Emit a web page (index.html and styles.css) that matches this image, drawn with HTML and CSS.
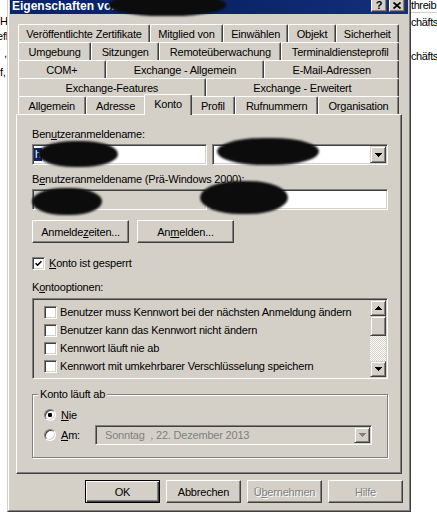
FILE: index.html
```html
<!DOCTYPE html>
<html lang="de">
<head>
<meta charset="utf-8">
<title>Eigenschaften von</title>
<link rel="stylesheet" href="styles.css">
</head>
<body>
<div class="desk">
  <div class="frag fl1">H</div>
  <div class="frag fl2">efl</div>
  <div class="frag fl3">,</div>
  <div class="frag fl4">f,</div>
  <div class="frag fr1">threib</div>
  <div class="gridline"></div>
  <div class="frag fr2">chäfts</div>
  <div class="frag fr3">chäfts</div>

  <div class="dialog">
    <div class="frame">
      <div class="titlebar">
        <div class="title">Eigenschaften von</div>
        <div class="tbtns">
          <div class="tbtn q">?</div>
          <div class="tbtn"><svg width="8" height="7" viewBox="0 0 8 7"><path d="M0.5 0.5L7.5 6.5M7.5 0.5L0.5 6.5" stroke="#000" stroke-width="1.7"/></svg></div>
        </div>
      </div>
      <div class="body">
        <div class="tabs">
          <div class="tabrow">
            <div class="tab">Veröffentlichte Zertifikate</div>
            <div class="tab">Mitglied von</div>
            <div class="tab">Einwählen</div>
            <div class="tab">Objekt</div>
            <div class="tab">Sicherheit</div>
          </div>
          <div class="tabrow">
            <div class="tab">Umgebung</div>
            <div class="tab">Sitzungen</div>
            <div class="tab">Remoteüberwachung</div>
            <div class="tab">Terminaldiensteprofil</div>
          </div>
          <div class="tabrow">
            <div class="tab">COM+</div>
            <div class="tab">Exchange - Allgemein</div>
            <div class="tab">E-Mail-Adressen</div>
          </div>
          <div class="tabrow">
            <div class="tab">Exchange-Features</div>
            <div class="tab">Exchange - Erweitert</div>
          </div>
          <div class="tabrow">
            <div class="tab">Allgemein</div>
            <div class="tab">Adresse</div>
            <div class="tab active">Konto</div>
            <div class="tab">Profil</div>
            <div class="tab">Rufnummern</div>
            <div class="tab">Organisation</div>
          </div>

          <div class="panel">
            <div class="content">
              <div class="lbl">Ben<u>u</u>tzeranmeldename:</div>
              <div class="fieldrow">
                <div class="edit half"><span class="selected">h</span></div>
                <div class="edit combo">
                  <div class="combo-text"></div>
                  <div class="ddbtn"><svg width="7" height="4" viewBox="0 0 7 4"><path d="M0 0h7v1H0zM1 1h5v1H1zM2 2h3v1H2zM3 3h1v1H3z" fill="#000"/></svg></div>
                </div>
              </div>
              <div class="lbl gap8">B<u>e</u>nutzeranmeldename (Prä-Windows 2000):</div>
              <div class="fieldrow">
                <div class="edit half readonly"></div>
                <div class="edit combo"></div>
              </div>
              <div class="btnrow">
                <div class="btn wide">Anmelde<u>z</u>eiten...</div>
                <div class="btn wide">An<u>m</u>elden...</div>
              </div>
              <div class="chkrow">
                <span class="cb"><svg width="7" height="7" viewBox="0 0 7 7"><path d="M0.6 3.2L2.6 5.2L6.4 1.2" stroke="#000" stroke-width="1.6" fill="none"/></svg></span>
                <span><u>K</u>onto ist gesperrt</span>
              </div>
              <div class="lbl gap11">K<u>o</u>ntooptionen:</div>
              <div class="listbox">
                <div class="items">
                  <div class="item"><span class="cb"></span><span>Benutzer muss Kennwort bei der nächsten Anmeldung ändern</span></div>
                  <div class="item"><span class="cb"></span><span>Benutzer kann das Kennwort nicht ändern</span></div>
                  <div class="item"><span class="cb"></span><span>Kennwort läuft nie ab</span></div>
                  <div class="item"><span class="cb"></span><span>Kennwort mit umkehrbarer Verschlüsselung speichern</span></div>
                </div>
                <div class="vscroll">
                  <div class="sbtn"><svg width="7" height="4" viewBox="0 0 7 4"><path d="M3 0h1v1H3zM2 1h3v1H2zM1 2h5v1H1zM0 3h7v1H0z" fill="#000"/></svg></div>
                  <div class="thumb"></div>
                  <div class="track"></div>
                  <div class="sbtn"><svg width="7" height="4" viewBox="0 0 7 4"><path d="M0 0h7v1H0zM1 1h5v1H1zM2 2h3v1H2zM3 3h1v1H3z" fill="#000"/></svg></div>
                </div>
              </div>
              <div class="group">
                <div class="group-title">Konto läuft ab</div>
                <div class="radiorow">
                  <span class="radio on"></span>
                  <span class="rlabel"><u>N</u>ie</span>
                </div>
                <div class="radiorow">
                  <span class="radio"></span>
                  <span class="rlabel am"><u>A</u>m:</span>
                  <div class="edit dtp">
                    <div class="dtp-text">Sonntag  , 22. Dezember 2013</div>
                    <div class="ddbtn"><svg width="7" height="4" viewBox="0 0 7 4"><path d="M0 0h7v1H0zM1 1h5v1H1zM2 2h3v1H2zM3 3h1v1H3z" fill="#808080"/></svg></div>
                  </div>
                </div>
              </div>
            </div>
          </div>
        </div>
        <div class="dlgbtns">
          <div class="btn dlg default">OK</div>
          <div class="btn dlg">Abbrechen</div>
          <div class="btn dlg disabled">Ü<u>b</u>ernehmen</div>
          <div class="btn dlg disabled">Hilfe</div>
        </div>
      </div>
    </div>
  </div>

  <div class="scr s1"></div>
  <div class="scr s2"></div>
  <div class="scr s3"></div>
  <div class="scr s4"></div>
  <div class="scr s5"></div>
</div>
</body>
</html>
```

FILE: styles.css
```css
* { box-sizing: border-box; }
html, body { margin: 0; padding: 0; }
body {
  width: 437px;
  height: 525px;
  background: #fff;
  font-family: "Liberation Sans", Arial, sans-serif;
  font-size: 11px;
  letter-spacing: -0.2px;
  color: #000;
  overflow: hidden;
}
.desk { position: relative; width: 437px; height: 525px; overflow: hidden; }

/* background window fragments */
.frag { position: absolute; line-height: 13px; white-space: nowrap; }
.fl1 { left: 0; top: 15px; }
.fl2 { left: -3px; top: 30px; }
.fl3 { left: 4px; top: 47px; }
.fl4 { left: 0; top: 66px; }
.fr1 { left: 411px; top: -1px; letter-spacing: -0.4px; }
.fr2 { left: 411px; top: 16px; letter-spacing: -0.4px; }
.fr3 { left: 411px; top: 50px; letter-spacing: -0.4px; }
.gridline { position: absolute; left: 411px; top: 12px; width: 26px; height: 1px; background: #d0d0d0; }

/* dialog window */
.dialog {
  position: absolute;
  left: 7px;
  top: -7px;
  width: 404px;
  height: 519px;
  background: #d4d0c8;
  border: 1px solid;
  border-color: #d4d0c8 #404040 #404040 #d4d0c8;
}
.frame {
  height: 100%;
  border: 1px solid;
  border-color: #fff #808080 #808080 #fff;
  padding: 1px;
  display: flex;
  flex-direction: column;
}
.titlebar {
  flex: none;
  height: 18px;
  background: linear-gradient(to right, #0a246a 0%, #0a246a 55%, #14307a 100%);
  color: #fff;
  display: flex;
  align-items: flex-start;
  padding: 2px 3px 0 2px;
}
.title {
  flex: 1;
  font-weight: bold;
  font-size: 12px;
  letter-spacing: 0;
  line-height: 16px;
  white-space: nowrap;
  overflow: hidden;
}
.tbtns { display: flex; gap: 2px; }
.tbtn {
  width: 16px;
  height: 14px;
  background: #d4d0c8;
  border: 1px solid;
  border-color: #fff #404040 #404040 #fff;
  box-shadow: inset -1px -1px #808080;
  display: flex;
  align-items: center;
  justify-content: center;
  color: #000;
}
.tbtn.q { font-weight: bold; font-size: 11px; line-height: 12px; }

.body { flex: 1; padding: 10px 3px 0 6px; }

/* tabs */
.tabs { width: 386px; }
.tabrow {
  display: flex;
  height: 18px;
  margin: 0 3px 0 2px;
}
.tab {
  flex: 1 1 auto;
  height: 18px;
  padding: 2px 3px 0;
  border-top: 1px solid #fff;
  border-left: 1px solid #fff;
  border-right: 1px solid #404040;
  border-radius: 2px 2px 0 0;
  box-shadow: inset -1px 0 #808080;
  background: #d4d0c8;
  text-align: center;
  line-height: 14px;
  white-space: nowrap;
}
.tab.active {
  position: relative;
  z-index: 1;
  height: 21px;
  margin: -2px -2px -1px;
}

.panel {
  width: 386px;
  height: 360px;
  border: 1px solid;
  border-color: #fff #404040 #404040 #fff;
  box-shadow: inset -1px -1px #808080;
  padding: 13px 0 0 15px;
}
.content { width: 356px; }

.lbl { height: 13px; line-height: 13px; white-space: nowrap; }
.gap8 { margin-top: 8px; }
.gap11 { margin-top: 11px; }

.fieldrow {
  margin-top: 3px;
  height: 21px;
  display: flex;
  justify-content: space-between;
}
.edit {
  height: 21px;
  background: #fff;
  border: 1px solid;
  border-color: #808080 #fff #fff #808080;
  box-shadow: inset 1px 1px #404040, inset -1px -1px #d4d0c8;
  padding: 1px;
  display: flex;
  align-items: center;
}
.edit.half { width: 175px; }
.edit.combo { width: 176px; }
.edit.readonly { background: #d4d0c8; }
.combo-text { flex: 1; }
.selected {
  background: #0a246a;
  color: #fff;
  line-height: 13px;
  padding: 0 1px;
}
.ddbtn {
  width: 16px;
  height: 17px;
  flex: none;
  background: #d4d0c8;
  border: 1px solid;
  border-color: #d4d0c8 #404040 #404040 #d4d0c8;
  box-shadow: inset 1px 1px #fff, inset -1px -1px #808080;
  display: flex;
  align-items: center;
  justify-content: center;
  margin-left: auto;
}

.btnrow { margin-top: 10px; display: flex; gap: 8px; }
.btn {
  height: 23px;
  background: #d4d0c8;
  border: 1px solid;
  border-color: #fff #404040 #404040 #fff;
  box-shadow: inset -1px -1px #808080;
  display: flex;
  align-items: center;
  justify-content: center;
  white-space: nowrap;
}
.btn.wide { width: 97px; }

.chkrow {
  margin-top: 14px;
  height: 13px;
  line-height: 13px;
  display: flex;
  align-items: center;
  gap: 4px;
}
.cb {
  flex: none;
  width: 13px;
  height: 13px;
  background: #fff;
  border: 1px solid;
  border-color: #808080 #fff #fff #808080;
  box-shadow: inset 1px 1px #404040, inset -1px -1px #d4d0c8;
  display: flex;
  align-items: center;
  justify-content: center;
}

.listbox {
  margin-top: 4px;
  width: 356px;
  height: 81px;
  background: #d4d0c8;
  border: 1px solid;
  border-color: #808080 #fff #fff #808080;
  box-shadow: inset 1px 1px #404040, inset -1px -1px #d4d0c8;
  padding: 1px;
  display: flex;
}
.items { flex: 1; padding: 3px 0 0 10px; }
.item {
  height: 18px;
  line-height: 13px;
  display: flex;
  align-items: center;
  gap: 3px;
  white-space: nowrap;
}
.vscroll { width: 16px; display: flex; flex-direction: column; }
.sbtn, .thumb {
  flex: none;
  width: 16px;
  background: #d4d0c8;
  border: 1px solid;
  border-color: #d4d0c8 #404040 #404040 #d4d0c8;
  box-shadow: inset 1px 1px #fff, inset -1px -1px #808080;
}
.sbtn { height: 16px; display: flex; align-items: center; justify-content: center; }
.thumb { height: 20px; }
.track {
  flex: 1;
  background: repeating-conic-gradient(#ffffff 0 25%, #d4d0c8 0 50%) 0 0 / 2px 2px;
}

.group {
  margin-top: 15px;
  width: 356px;
  height: 64px;
  border: 1px solid #808080;
  box-shadow: inset 1px 1px #fff, 1px 1px #fff;
  padding: 0 0 12px 0;
}
.group-title {
  width: max-content;
  margin: -7px 0 4px 5px;
  padding: 0 2px;
  line-height: 13px;
  background: #d4d0c8;
}
.radiorow {
  height: 20px;
  display: flex;
  align-items: center;
  padding-left: 11px;
  line-height: 13px;
}
.radio {
  flex: none;
  width: 12px;
  height: 12px;
  border-radius: 50%;
  border: 1px solid;
  border-color: #808080 #fff #fff #808080;
  box-shadow: inset 1px 1px #404040, inset -1px -1px #d4d0c8;
  background: #fff;
}
.radio.on {
  background: radial-gradient(circle at 50% 50%, #000 0 2px, #fff 2.4px);
}
.rlabel { margin-left: 5px; }
.rlabel.am { width: 34px; }
.edit.dtp {
  width: 277px;
  height: 20px;
  background: #d4d0c8;
}
.dtp-text {
  flex: 1;
  padding-left: 8px;
  color: #808080;
  white-space: pre;
  line-height: 13px;
}
.dtp .ddbtn { height: 16px; }

.dlgbtns {
  margin-top: 6px;
  display: flex;
  justify-content: flex-end;
  gap: 6px;
  padding-right: 2px;
}
.btn.dlg { width: 75px; }
.btn.default {
  border: 1px solid #000;
  box-shadow: inset 1px 1px #fff, inset -1px -1px #404040, inset -2px -2px #808080;
}
.btn.disabled { color: #808080; text-shadow: 1px 1px #fff; }

/* redaction scribbles over the names */
.scr {
  position: absolute;
  background: #0c0c0c;
  border-radius: 45% / 50%;
  filter: blur(1.3px);
}
.s1 { left: 108px; top: -6px; width: 118px; height: 22px; }
.s2 { left: 38px; top: 141px; width: 80px; height: 26px; }
.s3 { left: 217px; top: 138px; width: 102px; height: 27px; }
.s4 { left: 32px; top: 188px; width: 70px; height: 27px; }
.s5 { left: 200px; top: 181px; width: 88px; height: 33px; }
```
